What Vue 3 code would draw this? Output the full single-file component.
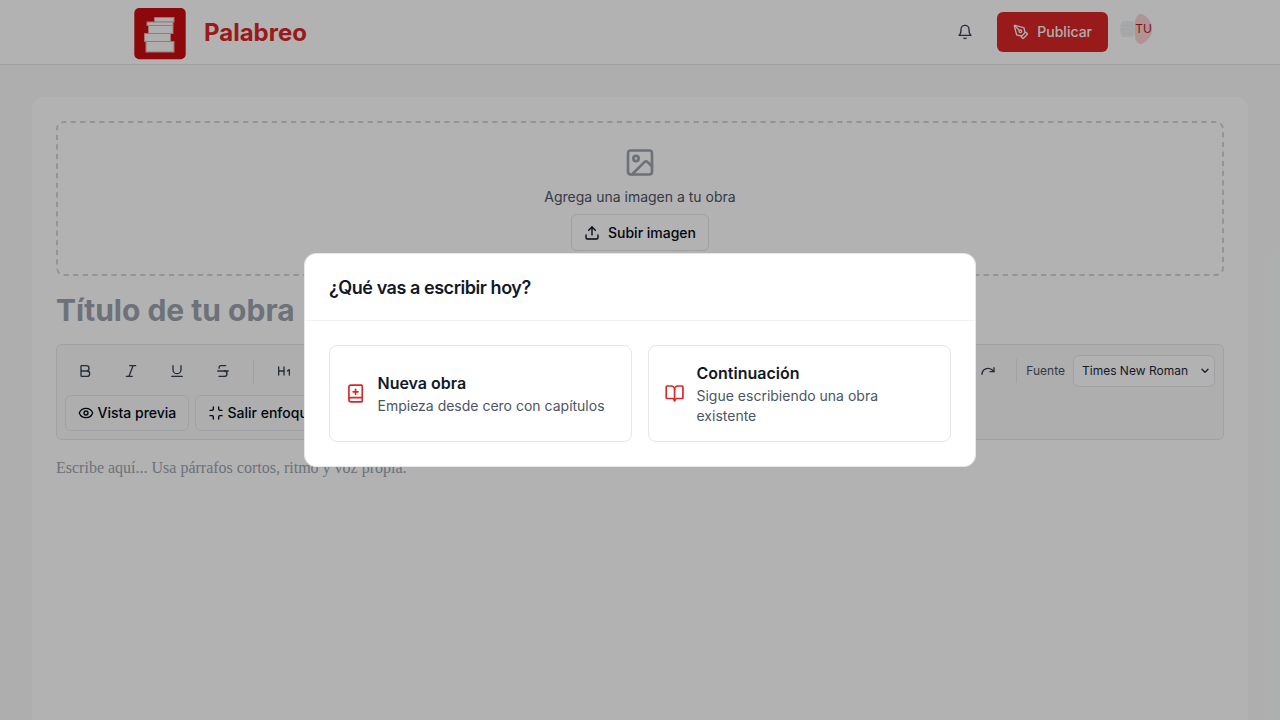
<script setup>
const formatTools = [
  { name: 'Negrita', paths: ['M6 12h9a4 4 0 0 1 0 8H7a1 1 0 0 1-1-1V5a1 1 0 0 1 1-1h7a4 4 0 0 1 0 8'] },
  { name: 'Cursiva', paths: ['M19 4h-9', 'M14 20H5', 'M15 4 9 20'] },
  { name: 'Subrayado', paths: ['M6 4v6a6 6 0 0 0 12 0V4', 'M4 20h16'] },
  { name: 'Tachado', paths: ['M16 4H9a3 3 0 0 0-2.83 4', 'M14 12a4 4 0 0 1 0 8H6', 'M4 12h16'] },
]
const choices = [
  {
    title: 'Nueva obra',
    text: 'Empieza desde cero con capítulos',
    paths: ['M12 7v6', 'M4 19.5v-15A2.5 2.5 0 0 1 6.5 2H19a1 1 0 0 1 1 1v18a1 1 0 0 1-1 1H6.5a1 1 0 0 1 0-5H20', 'M9 10h6'],
  },
  {
    title: 'Continuación',
    text: 'Sigue escribiendo una obra existente',
    paths: ['M12 7v14', 'M3 18a1 1 0 0 1-1-1V4a1 1 0 0 1 1-1h5a4 4 0 0 1 4 4 4 4 0 0 1 4-4h5a1 1 0 0 1 1 1v13a1 1 0 0 1-1 1h-6a3 3 0 0 0-3 3 3 3 0 0 0-3-3z'],
  },
]
</script>

<template>
  <div class="page">
    <header class="topbar">
      <div class="topbar-inner">
        <a class="brand">
          <svg class="logo" viewBox="0 0 52 52">
            <rect x="0.3" y="0" width="51.4" height="51.2" rx="5" fill="#c90c0f" />
            <g fill="#fafafa" stroke="#e8a5a7" stroke-width="1">
              <rect x="20.5" y="9.5" width="19.5" height="4.5" />
              <rect x="13" y="14" width="26" height="3.5" />
              <rect x="14.5" y="17.5" width="24.5" height="8" />
              <rect x="10.5" y="25.5" width="26" height="8" />
              <rect x="12" y="33.5" width="28" height="10.5" />
            </g>
          </svg>
          <span>Palabreo</span>
        </a>
        <div class="actions">
          <svg class="icon bell" viewBox="0 0 24 24">
            <path d="M6 8a6 6 0 0 1 12 0c0 7 3 9 3 9H3s3-2 3-9" />
            <path d="M10.3 21a1.94 1.94 0 0 0 3.4 0" />
          </svg>
          <button class="publish">
            <svg class="icon" viewBox="0 0 24 24">
              <path d="M15.707 21.293a1 1 0 0 1-1.414 0l-1.586-1.586a1 1 0 0 1 0-1.414l5.586-5.586a1 1 0 0 1 1.414 0l1.586 1.586a1 1 0 0 1 0 1.414z" />
              <path d="m18 13-1.375-6.874a1 1 0 0 0-.746-.776L3.235 2.028a1 1 0 0 0-1.207 1.207L5.35 15.879a1 1 0 0 0 .776.746L13 18" />
              <path d="m2.3 2.3 7.286 7.286" />
              <circle cx="11" cy="11" r="2" />
            </svg>
            Publicar
          </button>
          <div class="avatar">
            <span class="avatar-image"><i></i><i></i><i></i></span>
            <span class="avatar-initials">TU</span>
          </div>
        </div>
      </div>
    </header>

    <main class="editor">
      <section class="dropzone">
        <svg class="dashes" viewBox="0 0 1168 155">
          <rect x="1" y="1" width="1166" height="153" rx="7" />
        </svg>
        <svg class="icon picture" viewBox="0 0 24 24">
          <g transform="translate(0 -0.4)">
            <rect x="3" y="3" width="18" height="18" rx="2" />
            <circle cx="9" cy="9" r="2" />
            <path d="m21 15-3.086-3.086a2 2 0 0 0-2.828 0L6 21" />
          </g>
        </svg>
        <p>Agrega una imagen a tu obra</p>
        <button class="outline upload">
          <svg class="icon" viewBox="0 0 24 24">
            <path d="M21 15v4a2 2 0 0 1-2 2H5a2 2 0 0 1-2-2v-4" />
            <path d="m17 8-5-5-5 5" />
            <path d="M12 3v12" />
          </svg>
          Subir imagen
        </button>
      </section>

      <h1 class="work-title">Título de tu obra</h1>

      <section class="toolbar">
        <div class="row">
          <button v-for="tool in formatTools" :key="tool.name" class="tool" :aria-label="tool.name">
            <svg class="icon" viewBox="0 0 24 24"><path v-for="d in tool.paths" :key="d" :d="d" /></svg>
          </button>
          <span class="divider"></span>
          <button class="tool" aria-label="Encabezado 1">
            <svg class="icon" viewBox="0 0 24 24"><path d="M4 12h8" /><path d="M4 18V6" /><path d="M12 18V6" /><path d="m17 12 3-2v8" /></svg>
          </button>
          <div class="row-end">
            <button class="tool" aria-label="Rehacer">
              <svg class="icon" viewBox="0 0 24 24"><path d="M21 7v6h-6" /><path d="M3 17a9 9 0 0 1 9-9 9 9 0 0 1 6 2.3l3 2.7" /></svg>
            </button>
            <span class="divider"></span>
            <label>Fuente</label>
            <div class="font-select">
              <span>Times New Roman</span>
              <svg class="icon chevron" viewBox="0 0 8 6"><path d="M1 1.2 4 4.4 7 1.2" /></svg>
            </div>
          </div>
        </div>
        <div class="row">
          <button class="outline preview">
            <svg class="icon" viewBox="0 0 24 24">
              <path d="M2.062 12.348a1 1 0 0 1 0-.696 10.75 10.75 0 0 1 19.876 0 1 1 0 0 1 0 .696 10.75 10.75 0 0 1-19.876 0" />
              <circle cx="12" cy="12" r="3" />
            </svg>
            Vista previa
          </button>
          <button class="outline">
            <svg class="icon" viewBox="0 0 24 24">
              <path d="M8 3v3a2 2 0 0 1-2 2H3" /><path d="M21 8h-3a2 2 0 0 1-2-2V3" />
              <path d="M3 16h3a2 2 0 0 1 2 2v3" /><path d="M16 21v-3a2 2 0 0 1 2-2h3" />
            </svg>
            Salir enfoque
          </button>
        </div>
      </section>

      <p class="manuscript">Escribe aquí... Usa párrafos cortos, ritmo y voz propia.</p>
    </main>

    <div class="overlay"></div>
    <div class="dialog" role="dialog">
      <h2>¿Qué vas a escribir hoy?</h2>
      <div class="choices">
        <button v-for="c in choices" :key="c.title" class="choice">
          <svg class="icon" viewBox="0 0 24 24">
            <g transform="translate(-0.5 -0.6)"><path v-for="d in c.paths" :key="d" :d="d" /></g>
          </svg>
          <span>
            <strong>{{ c.title }}</strong>
            <small>{{ c.text }}</small>
          </span>
        </button>
      </div>
    </div>
  </div>
</template>

<style>
body { margin: 0; overflow: hidden; }
</style>

<style scoped>
* { box-sizing: border-box; }
.page {
  position: relative;
  height: 720px;
  overflow: hidden;
  background: #f9fafb;
  font-family: Inter, "Liberation Sans", sans-serif;
  font-size: 14px;
  line-height: 20px;
  color: #020817;
}
button { font: inherit; color: inherit; background: none; border: 0; margin: 0; padding: 0; }
h1, h2, p { margin: 0; }
.icon {
  width: 16px;
  height: 16px;
  flex: none;
  overflow: visible;
  fill: none;
  stroke: currentColor;
  stroke-width: 2;
  stroke-linecap: round;
  stroke-linejoin: round;
}
.topbar { height: 65px; background: #fff; border-bottom: 1px solid #e5e7eb; }
.topbar-inner {
  width: 1018px;
  height: 64px;
  margin-left: 134px;
  display: flex;
  justify-content: space-between;
  align-items: center;
}
.brand {
  display: flex;
  align-items: center;
  gap: 18px;
  padding-top: 3px;
  color: #dc2626;
  font-size: 24px;
  line-height: 32px;
  font-weight: 700;
}
.brand span { margin-top: -1px; }
.logo { width: 52px; height: 52px; display: block; }
.actions { display: flex; align-items: center; }
.bell { color: #374151; margin-right: 24px; }
.publish {
  height: 40px;
  padding: 0 16px;
  display: flex;
  align-items: center;
  gap: 8px;
  border-radius: 6px;
  background: #dc2626;
  color: #f8fafc;
  font-weight: 500;
}
.avatar {
  width: 32px;
  height: 32px;
  margin: 0 0 6px 12px;
  display: flex;
  align-items: center;
  border-radius: 50%;
  overflow: hidden;
}
.avatar-image {
  width: 15px;
  height: 16px;
  flex: none;
  display: flex;
  flex-direction: column;
  justify-content: center;
  gap: 3px;
  padding: 0 2px;
  border-radius: 4px;
  background: #eff1f4;
}
.avatar-image i { height: 1px; background: #e8ebef; }
.avatar-initials {
  flex: 1;
  height: 32px;
  display: flex;
  align-items: center;
  justify-content: center;
  border-radius: 9px;
  background: #fbd5d5;
  color: #b91c1c;
  font-size: 12px;
}
.editor {
  height: 700px;
  margin: 32px 32px 0;
  padding: 24px;
  background: #fff;
  border-radius: 12px;
}
.dropzone {
  position: relative;
  height: 155px;
  padding-top: 25.5px;
  display: flex;
  flex-direction: column;
  align-items: center;
  color: #4b5563;
}
.dashes {
  position: absolute;
  inset: 0;
  width: 1168px;
  height: 155px;
  fill: none;
  stroke: #d1d5db;
  stroke-width: 2;
  stroke-dasharray: 5.2 4.384;
  stroke-dashoffset: 3;
}
.picture { width: 32px; height: 32px; margin-bottom: 8.5px; color: #9ca3af; }
.outline {
  height: 36px;
  padding: 0 12px;
  display: flex;
  align-items: center;
  gap: 4px;
  border: 1px solid #e5e7eb;
  border-radius: 6px;
  color: #020817;
  font-weight: 500;
  white-space: nowrap;
}
.upload { margin-top: 7px; padding-top: 1px; height: 37px; gap: 8px; }
.row .outline { gap: 3.5px; }
.row .preview { width: 124px; }
.work-title { margin-top: 16px; font-size: 30px; line-height: 36px; font-weight: 700; color: #9ca3af; }
.toolbar {
  height: 96px;
  margin-top: 16px;
  padding: 8px;
  display: flex;
  flex-direction: column;
  gap: 6px;
  border: 1px solid #e5e7eb;
  border-radius: 6px;
  background: #f9fafb;
  color: #374151;
}
.row { height: 36px; display: flex; align-items: center; gap: 6px; }
.row-end { margin-left: auto; display: flex; align-items: center; }
.tool { width: 40px; height: 36px; display: flex; align-items: center; justify-content: center; }
.divider { width: 1px; height: 24px; margin: 0 4px; background: #e5e7eb; }
.row-end .divider { margin: 0 9px 0 8px; }
label { font-size: 12px; color: #4b5563; }
.font-select {
  width: 142px;
  height: 32px;
  margin-left: 8px;
  padding: 0 5px 0 8px;
  display: flex;
  align-items: center;
  justify-content: space-between;
  border: 1px solid #e5e7eb;
  border-radius: 6px;
  background: #fff;
  color: #1f2937;
  font-size: 12px;
}
.font-select .chevron { width: 8px; height: 6px; stroke-width: 1.3; }
.manuscript { margin-top: 16px; font: 16px/24px "Liberation Serif", serif; color: #9ca3af; }
.overlay { position: absolute; inset: 0; background: rgba(0, 0, 0, 0.3); }
.dialog {
  position: absolute;
  left: 50%;
  top: 50%;
  width: 672px;
  transform: translate(-50%, -50%);
  border: 1px solid #e5e7eb;
  border-radius: 12px;
  background: #fff;
}
.dialog h2 {
  padding: 25px 24px 23px;
  border-bottom: 1px solid #f1f2f4;
  color: #111827;
  font-size: 18px;
  line-height: 18px;
  font-weight: 600;
  letter-spacing: -0.45px;
}
.choices { display: grid; grid-template-columns: 1fr 1fr; gap: 16px; padding: 24px; }
.choice {
  height: 97px;
  padding: 0 16px;
  display: flex;
  align-items: center;
  gap: 11.5px;
  text-align: left;
  border: 1px solid #e5e7eb;
  border-radius: 8px;
}
.choice .icon { width: 20px; height: 20px; color: #dc2626; }
.choice strong { display: block; margin-bottom: 2px; font-size: 16px; line-height: 22px; font-weight: 600; color: #111827; }
.choice small { display: block; font-size: 14px; line-height: 20px; color: #4b5563; }
</style>
